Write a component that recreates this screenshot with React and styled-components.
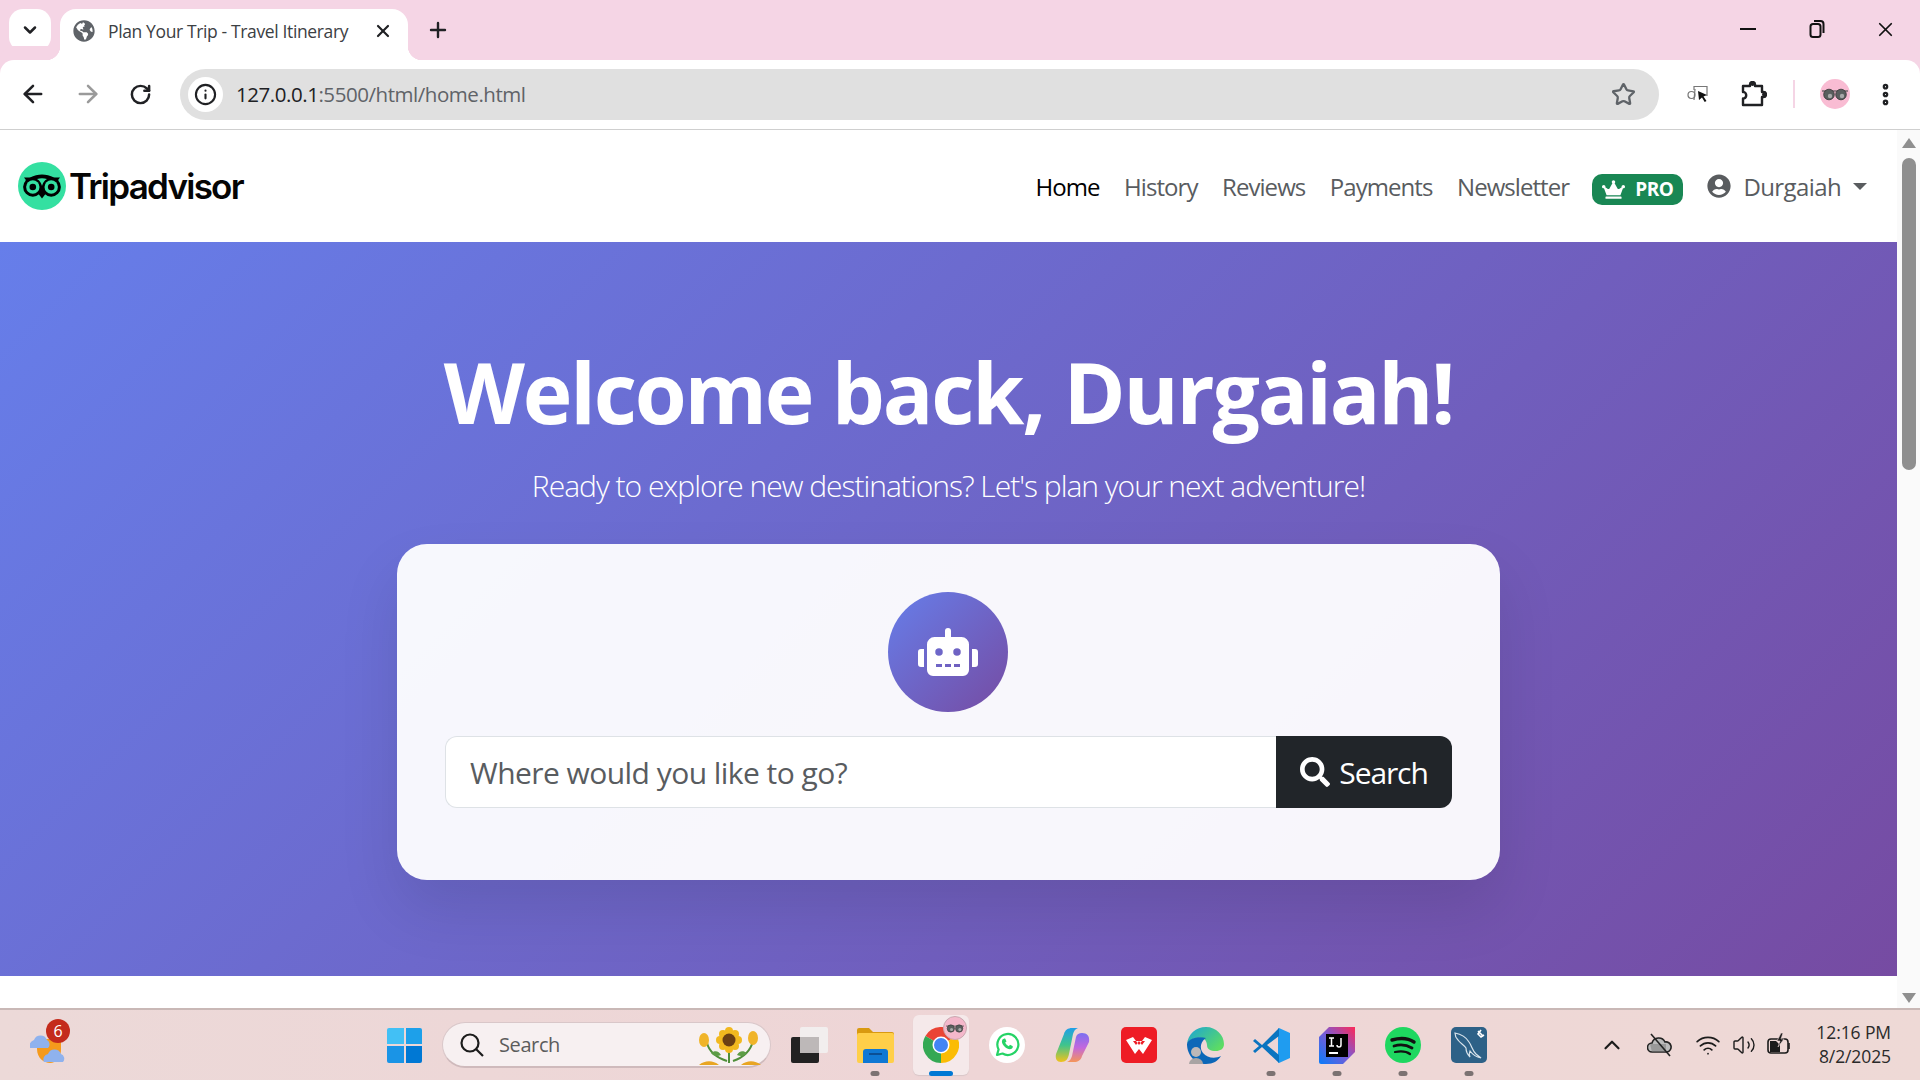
import React from "react";
import styled, { createGlobalStyle } from "styled-components";
import { FaCrown, FaGlobeAmericas, FaRobot, FaSearch, FaUserCircle } from "react-icons/fa";
import { ArrowLeft, ArrowRight, ChevronDown, ChevronUp, EllipsisVertical, Info, Plus, RotateCw, Star, Volume2, Wifi, X } from "lucide-react";

const GlobalStyle = createGlobalStyle`
  html, body { margin: 0; padding: 0; overflow: hidden; }
  body { font-family: "Open Sans", "Noto Sans", "Liberation Sans", sans-serif; background: #fff; }
  * { box-sizing: border-box; }
`;

const Screen = styled.div`
  width: 1920px;
  height: 1080px;
  display: flex;
  flex-direction: column;
  overflow: hidden;
`;

/* browser chrome */
const TabStrip = styled.div`
  height: 60px;
  flex: none;
  background: #f5d5e5;
  display: flex;
  align-items: flex-start;
  padding: 9px 0 0 9px;
`;

const TabMenu = styled.div`
  width: 42px;
  height: 42px;
  border-radius: 14px;
  background: #fff;
  color: #202124;
  display: flex;
  align-items: center;
  justify-content: center;
`;

const Tab = styled.div`
  position: relative;
  width: 348px;
  height: 51px;
  margin-left: 9px;
  padding: 0 13px 8px;
  background: #fff;
  border-radius: 16px 16px 0 0;
  display: flex;
  align-items: center;
  color: #5f6368;

  &::before, &::after {
    content: "";
    position: absolute;
    bottom: 0;
    width: 14px;
    height: 14px;
  }
  &::before { left: -14px; background: radial-gradient(circle at 0 0, #f5d5e5 14px, #fff 14.5px); }
  &::after { right: -14px; background: radial-gradient(circle at 100% 0, #f5d5e5 14px, #fff 14.5px); }
`;

const TabTitle = styled.span`
  margin-left: 13px;
  width: 265px;
  font-size: 17.5px;
  letter-spacing: -0.37px;
  color: #3c4043;
  white-space: nowrap;
`;

const CloseTab = styled.span`
  display: flex;
  color: #202124;
`;

const NewTab = styled.div`
  margin: 9px 0 0 18px;
  color: #202124;
  display: flex;
`;

const WindowControls = styled.div`
  margin-left: auto;
  display: flex;
  align-items: center;
  height: 40px;
  color: #111;
`;

const WindowButton = styled.div`
  width: 69px;
  display: flex;
  justify-content: center;
`;

const Toolbar = styled.div`
  height: 70px;
  flex: none;
  background: #fff;
  border-bottom: 1px solid #cfcfcf;
  display: flex;
  align-items: center;
  padding: 0 0 1px 0;
  border-radius: 14px 14px 0 0;
  box-shadow: 0 -14px 0 #f5d5e5;
`;

const NavGroup = styled.div`
  width: 180px;
  flex: none;
  display: flex;
  align-items: center;
  padding-left: 19px;
  gap: 27px;
`;

const AddressBar = styled.div`
  width: 1479px;
  height: 51px;
  flex: none;
  background: #e0e0e0;
  border-radius: 26px;
  display: flex;
  align-items: center;
  padding: 0 23px 0 8px;
`;

const SiteInfo = styled.div`
  width: 35px;
  height: 35px;
  border-radius: 50%;
  background: #fff;
  color: #202124;
  display: flex;
  align-items: center;
  justify-content: center;
`;

const Url = styled.div`
  margin-left: 13px;
  font-size: 20.5px;
  letter-spacing: -0.45px;
  color: #5f6368;
  flex: 1;
  white-space: nowrap;
  b { font-weight: 400; color: #202124; }
`;

const ToolbarRight = styled.div`
  flex: 1;
  display: flex;
  align-items: center;
  padding-left: 28px;
`;

const ExtensionButton = styled.span`
  display: flex;
  margin-left: 32px;
`;

const ToolDivider = styled.div`
  width: 2px;
  height: 28px;
  background: #f5d5e5;
  margin: 0 25px 0 26px;
`;

const ProfileAvatar = styled.div`
  width: 30px;
  height: 30px;
  border-radius: 50%;
  background: #f9bcd3;
  display: flex;
  align-items: center;
  justify-content: center;
`;

const MenuButton = styled.span`
  display: flex;
  margin-left: 22px;
  color: #202124;
`;

/* page */
const Viewport = styled.div`
  flex: 1;
  display: flex;
  min-height: 0;
`;

const Page = styled.div`
  flex: 1;
  min-width: 0;
  background: #fff;
`;

const Navbar = styled.nav`
  height: 112px;
  display: flex;
  align-items: center;
  padding: 0 18px;
`;

const Brand = styled.a`
  display: flex;
  align-items: center;
  gap: 3px;
  color: #000;
  margin-right: auto;
`;

const BrandName = styled.span`
  font-family: "Inter", "Liberation Sans", sans-serif;
  font-size: 35px;
  font-weight: 600;
  letter-spacing: -1.75px;
  color: #050505;
`;

const NavLink = styled.a`
  padding: 0 12.3px;
  font-size: 24px;
  letter-spacing: -0.95px;
  color: ${(p) => (p.$active ? "#000" : "#595c5f")};
  white-space: nowrap;
`;

const ProBadge = styled.span`
  margin: 6px 0 0 11px;
  width: 91px;
  height: 31px;
  border-radius: 10px;
  background: #198754;
  color: #fff;
  font-size: 19px;
  font-weight: 700;
  letter-spacing: -0.4px;
  display: flex;
  align-items: center;
  justify-content: center;
  gap: 10px;
`;

const UserMenu = styled.div`
  margin: 0 12px 0 24px;
  display: flex;
  align-items: center;
  color: #595c5f;
  font-size: 24px;
  letter-spacing: -0.6px;
  gap: 12px;
`;

const Caret = styled.span`
  width: 0;
  height: 0;
  border-top: 7px solid #595c5f;
  border-left: 7px solid transparent;
  border-right: 7px solid transparent;
`;

const Hero = styled.section`
  height: 734px;
  padding-top: 96px;
  background: linear-gradient(135deg, #667eea 0%, #764ba2 100%);
  display: flex;
  flex-direction: column;
  align-items: center;
  color: #fff;
`;

const Heading = styled.h1`
  margin: 0 0 17px;
  font-size: 84px;
  line-height: 108px;
  font-weight: 700;
  letter-spacing: -2.2px;
`;

const Lead = styled.p`
  margin: 0 0 36px;
  font-size: 30px;
  line-height: 45px;
  font-weight: 300;
  letter-spacing: -1px;
  color: #fff;
`;

const SearchCard = styled.div`
  width: 1103px;
  height: 336px;
  padding: 48px;
  border-radius: 30px;
  background: rgba(255, 255, 255, 0.95);
  box-shadow: 0 30px 60px rgba(0, 0, 0, 0.1);
  display: flex;
  flex-direction: column;
  align-items: center;
`;

const BotCircle = styled.div`
  width: 120px;
  height: 120px;
  flex: none;
  margin: 0 0 24px -1px;
  border-radius: 50%;
  background: linear-gradient(135deg, #667eea, #764ba2);
  color: #fff;
  display: flex;
  align-items: center;
  justify-content: center;
`;

const SearchForm = styled.form`
  width: 100%;
  height: 72px;
  display: flex;
`;

const SearchInput = styled.input`
  flex: 1;
  min-width: 0;
  height: 72px;
  padding: 0 24px;
  border: 1.5px solid #dee2e6;
  border-right: none;
  border-radius: 12px 0 0 12px;
  background: #fff;
  font-family: inherit;
  font-size: 30px;
  letter-spacing: -0.55px;
  color: #212529;
  &::placeholder { color: #595c5f; opacity: 1; }
`;

const SearchButton = styled.button`
  width: 176px;
  height: 72px;
  flex: none;
  border: none;
  border-radius: 0 12px 12px 0;
  background: #212529;
  color: #fff;
  font-family: inherit;
  font-size: 30px;
  letter-spacing: -1.1px;
  display: flex;
  align-items: center;
  justify-content: center;
  gap: 9px;
`;

const Scrollbar = styled.div`
  width: 23px;
  flex: none;
  background: #fafafa;
  display: flex;
  flex-direction: column;
  align-items: center;
  padding: 8px 0 5px 0;
`;

const ScrollUp = styled.span`
  width: 0;
  height: 0;
  border-bottom: 10px solid #8f8f8f;
  border-left: 7px solid transparent;
  border-right: 7px solid transparent;
`;

const ScrollThumb = styled.div`
  width: 14px;
  height: 312px;
  margin-top: 10px;
  border-radius: 7px;
  background: #8f8f8f;
`;

const ScrollDown = styled.span`
  margin-top: auto;
  width: 0;
  height: 0;
  border-top: 10px solid #8f8f8f;
  border-left: 7px solid transparent;
  border-right: 7px solid transparent;
`;

/* windows taskbar */
const Taskbar = styled.div`
  height: 72px;
  flex: none;
  background: linear-gradient(90deg, #ecd9d8, #eed5d6 50%, #eed9d6);
  border-top: 2px solid #c9b8b6;
  display: flex;
  align-items: center;
`;

const WeatherSlot = styled.div`
  position: relative;
  width: 387px;
  flex: none;
  padding: 0 0 0 30px;
  display: flex;
`;

const WeatherBadge = styled.span`
  position: absolute;
  left: 46px;
  top: -8px;
  width: 24px;
  height: 24px;
  border-radius: 50%;
  background: #c42b1c;
  color: #fff;
  font-size: 16px;
  display: flex;
  align-items: center;
  justify-content: center;
`;

const StartButton = styled.div`
  width: 35px;
  height: 35px;
  flex: none;
  display: grid;
  grid-template-columns: 1fr 1fr;
  grid-template-rows: 1fr 1fr;
  gap: 2px;
`;

const StartPane = styled.span`
  background: ${(p) => p.$fill};
  border-radius: ${(p) => p.$round};
`;

const TaskSearch = styled.div`
  width: 329px;
  height: 46px;
  flex: none;
  margin-left: 20px;
  border-radius: 23px;
  background: #f7f0f1;
  border: 1px solid #d9c7c9;
  border-bottom: 2px solid #cfbabc;
  display: flex;
  align-items: center;
  padding: 0 9px 0 16px;
  color: #5c5c5c;
  font-size: 20px;
  letter-spacing: -0.4px;
`;

const TaskSearchText = styled.span`
  margin-left: 14px;
  flex: 1;
`;

const TaskApps = styled.div`
  margin-left: 7px;
  display: flex;
  align-items: center;
`;

const TaskApp = styled.div`
  position: relative;
  height: 60px;
  display: flex;
  align-items: center;
  justify-content: center;
  border-radius: 6px;
  background: ${(p) => (p.$current ? "#f5e9ea" : "transparent")};
  box-shadow: ${(p) => (p.$current ? "0 1px 1px #d8c6c8" : "none")};
  width: ${(p) => (p.$current ? "56px" : "66px")};
  margin: ${(p) => (p.$current ? "0 5px" : "0")};

  &:first-child { margin-right: -2px; }

  &::after {
    content: "";
    display: ${(p) => (p.$running || p.$current ? "block" : "none")};
    position: absolute;
    bottom: -1px;
    left: 50%;
    transform: translateX(-50%);
    width: ${(p) => (p.$current ? "24px" : "9px")};
    height: 5px;
    border-radius: 3px;
    background: ${(p) => (p.$current ? "#0078d4" : "#7b7272")};
  }
`;

const ChromeProfile = styled.span`
  position: absolute;
  top: 1px;
  right: 2px;
  width: 24px;
  height: 24px;
  border-radius: 50%;
  background: #f4b8cb;
  border: 1px solid #c9a9b0;
  display: flex;
  align-items: center;
  justify-content: center;
`;

const Tray = styled.div`
  margin-left: auto;
  display: flex;
  align-items: center;
  color: #1c1c1c;
`;

const TrayIcon = styled.span`
  display: flex;
  width: ${(p) => p.$w}px;
  justify-content: center;
`;

const Clock = styled.div`
  margin: 0 29px 0 14px;
  padding-bottom: 3px;
  text-align: right;
  font-size: 17.5px;
  line-height: 24px;
  color: #2a2a2a;
  letter-spacing: -0.1px;
`;

/* drawings */
const OwlLogo = () => (
  <svg width="48" height="48" viewBox="0 0 48 48">
    <circle cx="24" cy="24" r="24" fill="#34e0a1" />
    <path d="M6 15.500h6C16 13.500 20 12.500 24 12.500s8 1 12 3h6l-3 4H9z" fill="#000" />
    <path d="M19 30l5 6.500 5-6.500-5-8z" fill="#000" />
    <circle cx="14.800" cy="25" r="9.700" fill="#000" />
    <circle cx="33.200" cy="25" r="9.700" fill="#000" />
    <circle cx="14.800" cy="25" r="6.700" fill="#34e0a1" />
    <circle cx="33.200" cy="25" r="6.700" fill="#34e0a1" />
    <circle cx="14.800" cy="25" r="3.300" fill="#000" />
    <circle cx="33.200" cy="25" r="3.300" fill="#000" />
    <path d="M24 24a11 11 0 0 1 5-7 16 16 0 0 0-10 0 11 11 0 0 1 5 7z" fill="#34e0a1" />
  </svg>
);

const Glasses = ({ width = 26 }) => (
  <svg width={width} height={width * 0.5} viewBox="0 0 26 13">
    <path d="M0 3h26" stroke="#555" strokeWidth="1.200" />
    <circle cx="7" cy="6.500" r="5.300" fill="#5a5f5e" stroke="#333" strokeWidth="0.800" />
    <circle cx="19" cy="6.500" r="5.300" fill="#5a5f5e" stroke="#333" strokeWidth="0.800" />
    <circle cx="8" cy="8" r="2.200" fill="#a8a8a8" />
    <circle cx="20" cy="8" r="2.200" fill="#a8a8a8" />
  </svg>
);

const PuzzleIcon = () => (
  <svg width="26" height="26" viewBox="0 0 26 26" fill="none" stroke="#202124" strokeWidth="2.400" strokeLinejoin="round">
    <path d="M2 5h7V3.500a2.500 2.500 0 0 1 5 0V5h7v6h1.500a2.500 2.500 0 0 1 0 5H21v8H2v-6.500h1a3.500 3.500 0 0 0 0-6.500H2z" />
    <circle cx="23" cy="13.500" r="2" fill="#202124" stroke="none" />
    <circle cx="11.500" cy="3" r="2" fill="#202124" stroke="none" />
  </svg>
);

const CursorTool = () => (
  <svg width="22" height="20" viewBox="0 0 22 20" fill="none">
    <path d="M7 6V2.500h13V12" stroke="#777" strokeWidth="1.200" />
    <circle cx="4.500" cy="11" r="3.500" stroke="#777" strokeWidth="1.200" />
    <path d="M8 5l-1 11" stroke="#777" strokeWidth="1.200" />
    <path d="M11 7l9 4-3.500 1.500 3 4.500-1.800 1-2.700-4.500L12 16z" fill="#111" />
  </svg>
);

const RestoreIcon = () => (
  <svg width="16" height="18" viewBox="0 0 16 18" fill="none" stroke="#111" strokeWidth="2">
    <rect x="1.500" y="4" width="10" height="13" rx="2.500" />
    <path d="M5 1h6.500a3 3 0 0 1 3 3v9" />
  </svg>
);

const WeatherIcon = () => (
  <svg width="36" height="36" viewBox="0 0 36 36">
    <path d="M7 12h24v10c0 9-5 14-11 14S7 31 7 22z" fill="#f59a1c" />
    <path d="M0 21a6 6 0 0 1 4-8 7 7 0 0 1 13 0 5 5 0 0 1 1 8z" fill="#8fb2ee" />
    <path d="M14 35a5.500 5.500 0 0 1 4-8 7 7 0 0 1 13 0 5 5 0 0 1 2 8z" fill="#8fb2ee" />
  </svg>
);

const Sunflower = () => (
  <svg width="62" height="40" viewBox="0 0 62 40">
    <path d="M30 20v18M8 18c2 8 8 14 20 18M54 16c-2 8-8 16-20 20" stroke="#4f8f3a" strokeWidth="2" fill="none" />
    <path d="M12 28c4-3 8-2 10 2-4 2-8 1-10-2zM48 28c-4-3-8-2-10 2 4 2 8 1 10-2z" fill="#5d9c46" />
    <path d="M0 40c6-5 14-5 20 0zM42 40c6-5 14-5 20 0z" fill="#e8a523" />
    <g fill="#f2b81f">
      <circle cx="30" cy="6" r="4" /><circle cx="30" cy="24" r="4" /><circle cx="21" cy="15" r="4" /><circle cx="39" cy="15" r="4" />
      <circle cx="24" cy="9" r="4" /><circle cx="36" cy="9" r="4" /><circle cx="24" cy="21" r="4" /><circle cx="36" cy="21" r="4" />
    </g>
    <circle cx="30" cy="15" r="6.500" fill="#6b3f14" />
    <ellipse cx="5" cy="15" rx="5" ry="7" fill="#f0b429" />
    <ellipse cx="54" cy="13" rx="5" ry="7" fill="#f0b429" />
  </svg>
);

const TaskViewIcon = () => (
  <svg width="40" height="36" viewBox="0 0 40 36">
    <rect x="9" y="0" width="28" height="26" rx="2" fill="#f2eeee" />
    <rect x="0" y="10" width="28" height="26" rx="2" fill="#222" />
    <rect x="9" y="10" width="19" height="16" fill="#bdb8b8" />
  </svg>
);

const FolderIcon = () => (
  <svg width="37" height="36" viewBox="0 0 37 36">
    <path d="M0 3a2 2 0 0 1 2-2h10l4 4h19a2 2 0 0 1 2 2v4H0z" fill="#d99a10" />
    <rect x="0" y="6" width="37" height="30" rx="2" fill="#ffcf49" />
    <path d="M6 36V25a3 3 0 0 1 3-3h19a3 3 0 0 1 3 3v11z" fill="#0f78d4" />
    <rect x="12" y="26" width="13" height="2" fill="#0b4f95" />
  </svg>
);

const ChromeIcon = () => (
  <svg width="36" height="36" viewBox="0 0 36 36">
    <path d="M18 18L2.400 9A18 18 0 0 1 33.600 9z" fill="#ea4335" />
    <path d="M18 18L33.600 9A18 18 0 0 1 18 36z" fill="#fbbc04" />
    <path d="M18 18L18 36A18 18 0 0 1 2.400 9z" fill="#34a853" />
    <circle cx="18" cy="18" r="8.500" fill="#fff" />
    <circle cx="18" cy="18" r="7" fill="#4285f4" />
  </svg>
);

const WhatsappIcon = () => (
  <svg width="36" height="36" viewBox="0 0 36 36">
    <circle cx="18" cy="18" r="18" fill="#fff" />
    <path d="M8 28l1.600-5.600A10.500 10.500 0 1 1 13.500 26.500z" fill="none" stroke="#25d366" strokeWidth="2.200" strokeLinejoin="round" />
    <path d="M14 12c-2 2-1 5 1.500 7.500S21 23 23 21.500c1-1 1-2 .5-2.500l-2.500-1.200-1.200 1.400c-1.500-.5-3-2-3.600-3.600l1.300-1.200-1.200-2.700c-.6-.3-1.200-.2-1.800.3z" fill="#25d366" />
  </svg>
);

const CopilotIcon = () => (
  <svg width="36" height="36" viewBox="0 0 36 36">
    <defs>
      <linearGradient id="copA" x1="0" y1="0" x2="0" y2="1">
        <stop offset="0" stopColor="#1f9fe8" /><stop offset="0.5" stopColor="#3fc48c" /><stop offset="1" stopColor="#f2c21b" />
      </linearGradient>
      <linearGradient id="copB" x1="0" y1="0" x2="0" y2="1">
        <stop offset="0" stopColor="#7a6ff0" /><stop offset="0.5" stopColor="#c267de" /><stop offset="1" stopColor="#f5955a" />
      </linearGradient>
    </defs>
    <path d="M9 7c1-4 4-6 8-6h6c-3 1-4 3-5 6l-4 20c-1 5-3 8-8 8-4 0-6-3-5-8z" fill="url(#copA)" />
    <path d="M27 29c-1 4-4 6-8 6h-7c3-1 4-3 5-6l4-19c1-3 3-4 6-4 5 0 8 3 7 9z" fill="url(#copB)" />
  </svg>
);

const WpsIcon = () => (
  <svg width="36" height="36" viewBox="0 0 36 36">
    <rect width="36" height="36" rx="5" fill="#ee1c25" />
    <path d="M5 13l7-3 6 8 6-8 7 3-9 14-4-5-4 5zM12 14l6 0-3 4zM18 14l6 0-3 4z" fill="#fff" fillRule="evenodd" />
  </svg>
);

const EdgeIcon = () => (
  <svg width="37" height="37" viewBox="0 0 37 37">
    <defs>
      <linearGradient id="edgeA" x1="0" y1="0" x2="1" y2="0.700">
        <stop offset="0" stopColor="#1aa3d8" /><stop offset="1" stopColor="#5ddc63" />
      </linearGradient>
    </defs>
    <path d="M0 17C1 7 9 0 19 0c10 0 18 8 18 17 0 5-4 7-8 7-6 0-9-2-9-6 0-6-6-9-11-7-5 1-8 3-9 6z" fill="url(#edgeA)" />
    <path d="M0 17c0 11 8 20 19 20 7 0 12-3 15-8-6 3-14 2-18-3-4-5-2-12 3-15-7-2-18 0-19 6z" fill="#0c67b8" />
    <circle cx="9" cy="25" r="5" fill="#bdb8b8" />
    <path d="M2 37a7 6 0 0 1 14 0z" fill="#a9a4a4" />
  </svg>
);

const VscodeIcon = () => (
  <svg width="37" height="37" viewBox="0 0 37 37">
    <path d="M26 1l11 5v25l-11 5-1-1V2z" fill="#1f9cf0" />
    <path d="M26 1L9 18 2 12 0 14l6 5-6 5 2 2 7-6 17 16 0-8-12-10L26 9z" fill="#0a74c0" />
  </svg>
);

const IntellijIcon = () => (
  <svg width="36" height="37" viewBox="0 0 36 37">
    <defs>
      <linearGradient id="ijA" x1="0" y1="1" x2="1" y2="0">
        <stop offset="0" stopColor="#087cfa" /><stop offset="0.500" stopColor="#7a5bd6" /><stop offset="1" stopColor="#fe2857" />
      </linearGradient>
    </defs>
    <path d="M10 0h26v25L24 37H2a2 2 0 0 1-2-2V10z" fill="url(#ijA)" />
    <rect x="7" y="7" width="22" height="23" fill="#000" />
    <rect x="10" y="25" width="9" height="2" fill="#fff" />
    <path d="M10 11h5M12.500 11v8M10 19h5M22 11v7a2 2 0 0 1-4 0" stroke="#fff" strokeWidth="1.500" fill="none" />
  </svg>
);

const SpotifyIcon = () => (
  <svg width="36" height="36" viewBox="0 0 36 36" fill="none" stroke="#111" strokeLinecap="round">
    <circle cx="18" cy="18" r="18" fill="#1ed760" stroke="none" />
    <path d="M7 13c7-2 16-2 22 2" strokeWidth="3.400" />
    <path d="M9 19c6-2 13-1 18 2" strokeWidth="2.800" />
    <path d="M10 25c5-1 11-1 15 2" strokeWidth="2.200" />
  </svg>
);

const MysqlIcon = () => (
  <svg width="36" height="36" viewBox="0 0 36 36">
    <rect width="36" height="36" rx="5" fill="#2d6187" />
    <path d="M4 6c6 1 11 4 14 9 3 4 3 8 7 12l5 4c-5-1-8-3-11-7-1 2-1 4 0 6-3-3-4-6-4-9-2-3-6-5-8-8-2-2-3-5-3-7z" fill="none" stroke="#d9e4ec" strokeWidth="1.200" />
    <path d="M27 4l5 5M30 3l-3 4 3 3 3-2" stroke="#fff" strokeWidth="1.600" fill="none" />
  </svg>
);

const CloudSyncIcon = () => (
  <svg width="26" height="24" viewBox="0 0 26 24">
    <path d="M5 19a4.500 4.500 0 0 1 0-9 7 7 0 0 1 13-1 5 5 0 0 1 2 10z" fill="#bbb" stroke="#222" strokeWidth="1.600" />
    <path d="M3 11h16v8H5z" fill="#777" opacity="0.500" />
    <path d="M4 1l19 22" stroke="#222" strokeWidth="1.600" />
  </svg>
);

const BatteryIcon = () => (
  <svg width="24" height="24" viewBox="0 0 24 24">
    <rect x="1" y="6" width="20" height="14" rx="3" fill="none" stroke="#1c1c1c" strokeWidth="1.600" />
    <path d="M22 10v6" stroke="#1c1c1c" strokeWidth="1.600" />
    <path d="M3 8h6l4 4v7H3z" fill="#1c1c1c" />
    <path d="M14 0l-4 8h3l-2 6 6-8h-3l2-6z" fill="#1c1c1c" stroke="#eed7d6" strokeWidth="0.600" />
  </svg>
);

const navItems = ["History", "Reviews", "Payments", "Newsletter"];

export default function App() {
  return (
    <Screen>
      <GlobalStyle />
      <TabStrip>
        <TabMenu><ChevronDown size={20} strokeWidth={3} /></TabMenu>
        <Tab>
          <FaGlobeAmericas size={22} />
          <TabTitle>Plan Your Trip - Travel Itinerary</TabTitle>
          <CloseTab><X size={20} strokeWidth={2.600} /></CloseTab>
        </Tab>
        <NewTab><Plus size={24} strokeWidth={2.400} /></NewTab>
        <WindowControls>
          <WindowButton><svg width="16" height="2"><rect width="16" height="2" fill="#111" /></svg></WindowButton>
          <WindowButton><RestoreIcon /></WindowButton>
          <WindowButton><X size={23} strokeWidth={1.800} /></WindowButton>
        </WindowControls>
      </TabStrip>

      <Toolbar>
        <NavGroup>
          <ArrowLeft size={28} color="#202124" strokeWidth={2.200} />
          <ArrowRight size={28} color="#9a9a9a" strokeWidth={2.200} />
          <RotateCw size={23} color="#202124" strokeWidth={2.600} />
        </NavGroup>
        <AddressBar>
          <SiteInfo><Info size={23} strokeWidth={2.200} /></SiteInfo>
          <Url><b>127.0.0.1</b>:5500/html/home.html</Url>
          <Star size={25} color="#5f6368" strokeWidth={2.200} />
        </AddressBar>
        <ToolbarRight>
          <CursorTool />
          <ExtensionButton><PuzzleIcon /></ExtensionButton>
          <ToolDivider />
          <ProfileAvatar><Glasses width={26} /></ProfileAvatar>
          <MenuButton><EllipsisVertical size={27} strokeWidth={3} /></MenuButton>
        </ToolbarRight>
      </Toolbar>

      <Viewport>
        <Page>
          <Navbar>
            <Brand>
              <OwlLogo />
              <BrandName>Tripadvisor</BrandName>
            </Brand>
            <NavLink $active>Home</NavLink>
            {navItems.map((item) => (
              <NavLink key={item}>{item}</NavLink>
            ))}
            <ProBadge><FaCrown size={23} />PRO</ProBadge>
            <UserMenu>
              <FaUserCircle size={24} />
              Durgaiah
              <Caret />
            </UserMenu>
          </Navbar>
          <Hero>
            <Heading>Welcome back, Durgaiah!</Heading>
            <Lead>Ready to explore new destinations? Let's plan your next adventure!</Lead>
            <SearchCard>
              <BotCircle><FaRobot size={60} /></BotCircle>
              <SearchForm onSubmit={(e) => e.preventDefault()}>
                <SearchInput placeholder="Where would you like to go?" />
                <SearchButton type="submit"><FaSearch size={30} />Search</SearchButton>
              </SearchForm>
            </SearchCard>
          </Hero>
        </Page>
        <Scrollbar>
          <ScrollUp />
          <ScrollThumb />
          <ScrollDown />
        </Scrollbar>
      </Viewport>

      <Taskbar>
        <WeatherSlot>
          <WeatherIcon />
          <WeatherBadge>6</WeatherBadge>
        </WeatherSlot>
        <StartButton>
          <StartPane $fill="#42c0f5" $round="2px 0 0 0" />
          <StartPane $fill="#1da0ea" $round="0 2px 0 0" />
          <StartPane $fill="#1a94e6" $round="0 0 0 2px" />
          <StartPane $fill="#0078d4" $round="0 0 2px 0" />
        </StartButton>
        <TaskSearch>
          <svg width="26" height="26" viewBox="0 0 26 26" fill="none" stroke="#1c1c1c" strokeWidth="2.200">
            <circle cx="11" cy="11" r="8.500" />
            <path d="M17 17l7 7" />
          </svg>
          <TaskSearchText>Search</TaskSearchText>
          <Sunflower />
        </TaskSearch>
        <TaskApps>
          <TaskApp><TaskViewIcon /></TaskApp>
          <TaskApp $running><FolderIcon /></TaskApp>
          <TaskApp $current><ChromeIcon /><ChromeProfile><Glasses width={18} /></ChromeProfile></TaskApp>
          <TaskApp><WhatsappIcon /></TaskApp>
          <TaskApp><CopilotIcon /></TaskApp>
          <TaskApp><WpsIcon /></TaskApp>
          <TaskApp><EdgeIcon /></TaskApp>
          <TaskApp $running><VscodeIcon /></TaskApp>
          <TaskApp $running><IntellijIcon /></TaskApp>
          <TaskApp $running><SpotifyIcon /></TaskApp>
          <TaskApp $running><MysqlIcon /></TaskApp>
        </TaskApps>
        <Tray>
          <TrayIcon $w={48}><ChevronUp size={26} strokeWidth={2} /></TrayIcon>
          <TrayIcon $w={48}><CloudSyncIcon /></TrayIcon>
          <TrayIcon $w={48}><Wifi size={26} strokeWidth={1.600} /></TrayIcon>
          <TrayIcon $w={24}><Volume2 size={26} strokeWidth={1.400} /></TrayIcon>
          <TrayIcon $w={46}><BatteryIcon /></TrayIcon>
          <Clock>12:16 PM<br />8/2/2025</Clock>
        </Tray>
      </Taskbar>
    </Screen>
  );
}
